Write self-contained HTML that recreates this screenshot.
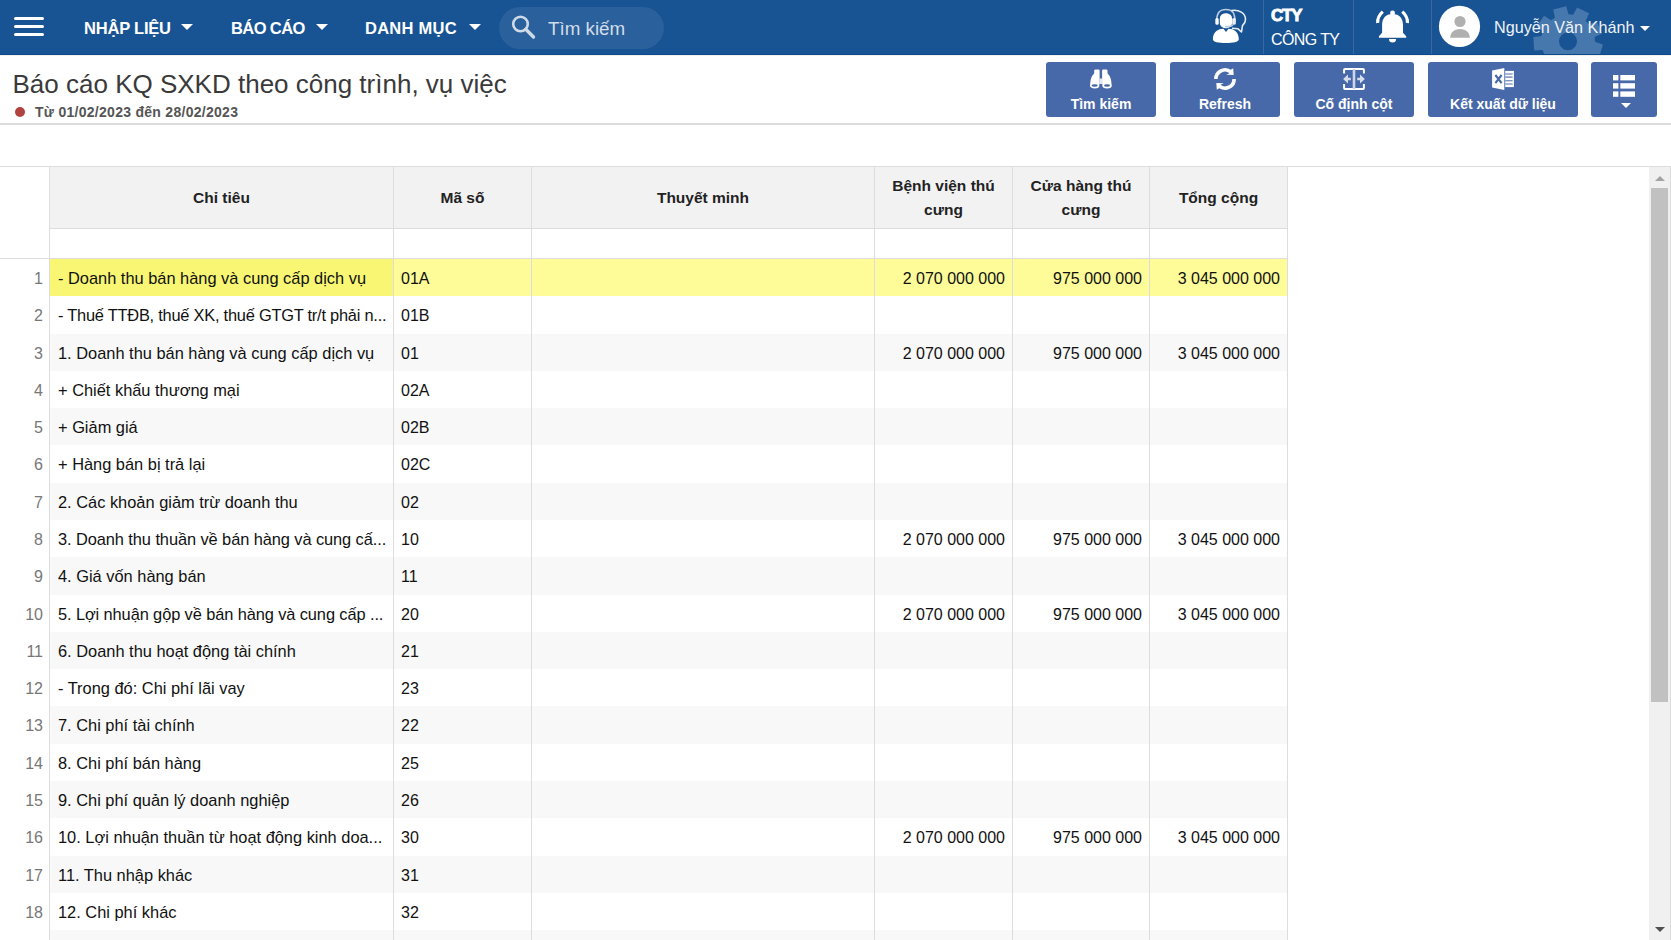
<!DOCTYPE html>
<html><head><meta charset="utf-8">
<style>
*{box-sizing:border-box;margin:0;padding:0}
html,body{width:1671px;height:940px;overflow:hidden;background:#fff;font-family:"Liberation Sans",sans-serif}
#nav{position:absolute;left:0;top:0;width:1671px;height:55px;background:#185393;border-bottom:1px solid #0a4a8e;overflow:hidden}
.ham{position:absolute;left:14px;width:30px;height:3px;background:#fff;border-radius:1.5px}
.menu{position:absolute;top:18px;color:#fff;font-weight:bold;font-size:16.5px;line-height:20px;white-space:nowrap;letter-spacing:-0.2px}
.caret{position:absolute;width:0;height:0;border-left:6px solid transparent;border-right:6px solid transparent;border-top:6px solid #fff}
#search{position:absolute;left:499px;top:7px;width:165px;height:42px;border-radius:21px;background:rgba(255,255,255,0.08)}
#sph{position:absolute;left:548px;top:17.5px;font-size:18.8px;line-height:22px;color:#d3dde9;white-space:nowrap}
.vdiv{position:absolute;top:0;width:1px;height:54px;background:#3a68a0}
.ico{position:absolute;overflow:visible}
#cty{position:absolute;left:1271px;top:6px;font-size:16.8px;line-height:19px;font-weight:bold;color:#fff;letter-spacing:-1.1px;-webkit-text-stroke:0.9px #fff;white-space:nowrap}
#congty{position:absolute;left:1271px;top:30px;font-size:16px;line-height:19px;color:#fff;white-space:nowrap;letter-spacing:-0.6px}
#uname{position:absolute;left:1494px;top:17px;font-size:16.2px;line-height:20px;color:#eef2f7;white-space:nowrap}
.btn{position:absolute;top:62px;height:55px;background:#4769a9;border-radius:3px;color:#fff;font-weight:bold;font-size:14px;text-align:center}
.btn span{position:absolute;left:0;right:0;top:34px;line-height:16px;white-space:nowrap}
#title{position:absolute;left:12.5px;top:68px;font-size:26px;line-height:32px;color:#3a3a3a;white-space:nowrap}
#date{position:absolute;left:35px;top:104px;font-size:14px;line-height:17px;color:#555;font-weight:bold;white-space:nowrap;letter-spacing:0.28px}
#dot{position:absolute;left:15px;top:107px;width:10px;height:10px;border-radius:50%;background:#b04340}
#hline{position:absolute;left:0;top:123px;width:1671px;height:2px;background:#dcdcdc}
#grid{position:absolute;left:0;top:166px;width:1671px;height:774px;border-top:1px solid #dddddd;overflow:hidden}
.vl{position:absolute;width:1px;background:#dddddd}
.hl{position:absolute;height:1px;background:#dddddd}
.hdr{position:absolute;top:0;height:62px;background:#f2f2f2}
.ht{position:absolute;font-weight:bold;font-size:15.5px;line-height:24px;color:#222;text-align:center;white-space:nowrap}
.row{position:absolute;left:50px;width:1237px;height:37.29px}
.c{position:absolute;top:0;height:100%;font-size:16px;line-height:39px;color:#111;white-space:nowrap;overflow:hidden}
.num{position:absolute;left:0;width:43px;text-align:right;font-size:16px;line-height:39px;color:#777}
.r{text-align:right}
</style></head><body>
<div id="nav">
  <svg class="ico" style="left:1488px;top:0" width="150" height="54" viewBox="1488 0 150 54"><g transform="translate(1568 41.3)"><path fill="#4677ad" fill-rule="evenodd" d="M-13.1 -23.6 L-14.8 -31.7 L-1.8 -35.0 L0.5 -27.0 L5.2 -26.5 L9.1 -33.8 L21.1 -28.0 L17.7 -20.4 L21.0 -17.0 L28.7 -20.1 L34.1 -7.9 L26.7 -4.2 L27.0 0.5 L34.9 3.1 L31.2 15.9 L23.1 13.9 L20.4 17.7 L24.7 24.7 L13.7 32.2 L8.8 25.5 L4.2 26.7 L3.1 34.9 L-10.2 33.5 L-9.7 25.2 L-13.9 23.1 L-20.1 28.7 L-29.4 19.1 L-23.6 13.1 L-25.5 8.8 L-33.8 9.1 L-34.7 -4.3 L-26.5 -5.2 L-25.2 -9.7 L-31.7 -14.8 L-23.9 -25.6 L-17.0 -21.0Z M9 0 A9 9 0 1 0 -9 0 A9 9 0 1 0 9 0Z"/></g></svg>
  <div class="ham" style="top:17px"></div>
  <div class="ham" style="top:25px"></div>
  <div class="ham" style="top:33px"></div>
  <div class="menu" style="left:84px">NHẬP LIỆU</div><div class="caret" style="left:181px;top:24px"></div>
  <div class="menu" style="left:231px;letter-spacing:-0.6px">BÁO CÁO</div><div class="caret" style="left:316px;top:24px"></div>
  <div class="menu" style="left:365px;letter-spacing:0.25px">DANH MỤC</div><div class="caret" style="left:469px;top:24px"></div>
  <div id="search"></div>
  <svg class="ico" style="left:510px;top:14px" width="28" height="26" viewBox="0 0 28 26"><circle cx="10.5" cy="10" r="7.3" fill="none" stroke="#cfdae7" stroke-width="2.6"/><path d="M15.8 15.3 L23.5 23" stroke="#cfdae7" stroke-width="3.4" stroke-linecap="round"/></svg>
  <div id="sph">Tìm kiếm</div>
  <svg class="ico" style="left:1208px;top:6px" width="44" height="42" viewBox="0 0 44 42">
    <path d="M8.5 17 C8.5 6 12 3.5 18 3.5 C24 3.5 27 6 27 16" fill="none" stroke="#b9cbe0" stroke-width="1.6"/>
    <path d="M23.5 4.5 C31 3.5 37.5 7 37.5 13.5 C37.5 17 35.5 18.5 34.5 19.5 L33.5 26 L30 22.8 L24 22.3" fill="none" stroke="#e6edf5" stroke-width="1.6" stroke-linejoin="round"/>
    <rect x="11.8" y="7.2" width="12.3" height="15" rx="5.5" fill="#fff"/>
    <rect x="7.4" y="12" width="3.3" height="6.8" rx="1.5" fill="#fff"/>
    <rect x="24.2" y="12" width="3.6" height="6.8" rx="1.5" fill="#e9eff6"/>
    <path d="M25 18.5 C24 21 21.5 20.6 17 20.6" fill="none" stroke="#b9cbe0" stroke-width="1.6"/>
    <path d="M4.9 33.5 C4.9 26 10 22.8 15.5 22.8 L18 26 L20.5 22.8 C26 22.8 30.8 26 30.8 33.5 C30.8 36 25 37 17.9 37 C10.5 37 4.9 36 4.9 33.5Z" fill="#fff"/>
  </svg>
  <div class="vdiv" style="left:1263px"></div>
  <div id="cty">CTY</div>
  <div id="congty">CÔNG TY</div>
  <div class="vdiv" style="left:1353px"></div>
  <svg class="ico" style="left:1370px;top:6px" width="44" height="42" viewBox="0 0 44 42">
    <rect x="20.1" y="4.5" width="4.9" height="5" rx="2.4" fill="#fff"/>
    <path d="M22.5 8 C15.5 8 12.1 12.5 12.1 19 L12.1 26.8 L8.9 30.3 L8.9 31.7 L36.2 31.7 L36.2 30.3 L33 26.8 L33 19 C33 12.5 29.5 8 22.5 8Z" fill="#fff"/>
    <path d="M19 33 A3.55 3.55 0 0 0 26.1 33Z" fill="#fff"/>
    <path d="M12.8 5.6 C9 9 7.3 12.5 7.7 17" fill="none" stroke="#fff" stroke-width="3.2"/>
    <path d="M32.3 5.6 C36.1 9 37.8 12.5 37.4 17" fill="none" stroke="#fff" stroke-width="3.2"/>
  </svg>
  <div class="vdiv" style="left:1431px"></div>
  <svg class="ico" style="left:1436px;top:4px" width="48" height="46" viewBox="0 0 48 46">
    <circle cx="23.5" cy="22.4" r="20.6" fill="#fff"/>
    <circle cx="24" cy="17.5" r="5.6" fill="#b0b0b0"/>
    <path d="M14.2 33.8 C14.2 28.5 18 25 24 25 C30 25 33.8 28.5 33.8 33.8Z" fill="#b0b0b0"/>
  </svg>
  <div id="uname">Nguyễn Văn Khánh</div>
  <div class="caret" style="left:1640px;top:26px;border-left-width:5px;border-right-width:5px;border-top-width:5px"></div>
</div>
<div style="position:absolute;left:0;top:55px;width:1671px;height:1px;background:#f1eeeb"></div>
<div id="title">Báo cáo KQ SXKD theo công trình, vụ việc</div>
<div id="dot"></div>
<div id="date">Từ 01/02/2023 đến 28/02/2023</div>
<div class="btn" style="left:1046px;width:110px"><span>Tìm kiếm</span>
  <svg class="ico" style="left:43px;top:2px" width="26" height="28" viewBox="-1 0 26 28">
    <path d="M4.2 6.6 Q4.3 5.5 5.5 5.5 H8.5 Q9.6 5.5 9.6 6.6 V20.5 H0.1 Q0.1 16 1.8 12.5 L4.2 9.2Z" fill="#fff"/>
    <path d="M17.5 6.6 Q17.4 5.5 16.2 5.5 H13.2 Q12.1 5.5 12.1 6.6 V20.5 H21.6 Q21.6 16 19.9 12.5 L17.5 9.2Z" fill="#fff"/>
    <rect x="9.5" y="14.5" width="2.7" height="5.5" fill="#e3e9f2"/>
    <ellipse cx="4.65" cy="21.6" rx="3.9" ry="2.1" fill="#4769a9" stroke="#fff" stroke-width="1.7"/>
    <ellipse cx="17.05" cy="21.6" rx="3.9" ry="2.1" fill="#4769a9" stroke="#fff" stroke-width="1.7"/>
  </svg>
</div>
<div class="btn" style="left:1170px;width:110px"><span>Refresh</span>
  <svg class="ico" style="left:44px;top:6px" width="22" height="22" viewBox="0 0 1536 1536"><path fill="#fff" d="M0 768 A768 768 0 0 1 1175 117 L1340 25 L1375 490 L855 470 L1083 365 A512 512 0 0 0 256 768 Z M1536 768 A768 768 0 0 1 361 1419 L196 1511 L161 1046 L681 1066 L453 1171 A512 512 0 0 0 1280 768 Z"/></svg>
</div>
<div class="btn" style="left:1294px;width:120px"><span>Cố định cột</span>
  <svg class="ico" style="left:45px;top:2px" width="30" height="30" viewBox="0 0 30 30">
    <path d="M5.1 9.5 V5.8 Q5.1 5 6 5 H24 Q24.9 5 24.9 5.8 V9.5" fill="none" stroke="#fff" stroke-width="2"/>
    <path d="M5.1 20 V24 Q5.1 24.9 6 24.9 H24 Q24.9 24.9 24.9 24 V20" fill="none" stroke="#fff" stroke-width="2"/>
    <rect x="13.7" y="5" width="2.6" height="20" fill="#cdd6e6"/>
    <path d="M4.1 15 L9 10.5 V19.5Z M8 13.7 H11.8 V16.3 H8Z" fill="#d5dcea"/>
    <path d="M25.9 15 L21 10.5 V19.5Z M22 13.7 H18.2 V16.3 H22Z" fill="#d5dcea"/>
  </svg>
</div>
<div class="btn" style="left:1428px;width:150px"><span>Kết xuất dữ liệu</span>
  <svg class="ico" style="left:60px;top:2px" width="30" height="30" viewBox="0 0 30 30">
    <rect x="17.2" y="6.9" width="8.7" height="16.2" fill="#fff"/>
    <rect x="17.2" y="9.3" width="7.4" height="1.4" fill="#7f96c2"/>
    <rect x="17.2" y="12.3" width="7.4" height="1.6" fill="#7f96c2"/>
    <rect x="17.2" y="16" width="7.4" height="1.4" fill="#7f96c2"/>
    <rect x="17.2" y="19.3" width="7.4" height="1.4" fill="#7f96c2"/>
    <path d="M4.1 6.4 L16.3 4.1 V25.9 L4.1 23.6Z" fill="#fff"/>
    <path d="M7.4 11 L13.6 19.2 M13.6 11 L7.4 19.2" stroke="#4769a9" stroke-width="2.1"/>
  </svg>
</div>
<div class="btn" style="left:1591px;width:66px">
  <svg class="ico" style="left:15px;top:6px" width="36" height="48" viewBox="1606 68 36 48">
    <rect x="1613" y="75" width="5.4" height="5.4" fill="#fff"/><rect x="1620.3" y="75" width="14.7" height="5.4" fill="#fff"/>
    <rect x="1613" y="83.2" width="5.4" height="5.4" fill="#fff"/><rect x="1620.3" y="83.2" width="14.7" height="5.4" fill="#fff"/>
    <rect x="1613" y="91.4" width="5.4" height="5.4" fill="#fff"/><rect x="1620.3" y="91.4" width="14.7" height="5.4" fill="#fff"/>
    <path d="M1621 102.9 H1631 L1626 108Z" fill="#fff"/>
  </svg>
</div>
<div id="hline"></div>
<div id="grid">
<div class="hdr" style="left:50px;width:1237px;top:0;height:61px"></div>
<div class="row" style="top:92.00px;background:#fdfc98">
<div class="c" style="left:0;width:343px;background:#f8f673"></div>
<div class="c" style="left:8px;width:340px;font-size:16.4px;letter-spacing:0px">- Doanh thu bán hàng và cung cấp dịch vụ</div>
<div class="c" style="left:351px;width:130px">01A</div>
<div class="c r" style="left:825px;width:130px">2 070 000 000</div>
<div class="c r" style="left:962px;width:130px">975 000 000</div>
<div class="c r" style="left:1100px;width:130px">3 045 000 000</div>
</div>
<div class="num" style="top:92.00px">1</div>
<div class="row" style="top:129.29px;background:#ffffff">
<div class="c" style="left:8px;width:340px;font-size:16.4px;letter-spacing:-0.23px">- Thuế TTĐB, thuế XK, thuế GTGT tr/t phải n...</div>
<div class="c" style="left:351px;width:130px">01B</div>
</div>
<div class="num" style="top:129.29px">2</div>
<div class="row" style="top:166.58px;background:#f8f8f8">
<div class="c" style="left:8px;width:340px;font-size:16.4px;letter-spacing:0px">1. Doanh thu bán hàng và cung cấp dịch vụ</div>
<div class="c" style="left:351px;width:130px">01</div>
<div class="c r" style="left:825px;width:130px">2 070 000 000</div>
<div class="c r" style="left:962px;width:130px">975 000 000</div>
<div class="c r" style="left:1100px;width:130px">3 045 000 000</div>
</div>
<div class="num" style="top:166.58px">3</div>
<div class="row" style="top:203.87px;background:#ffffff">
<div class="c" style="left:8px;width:340px;font-size:16.4px;letter-spacing:0px">+ Chiết khấu thương mại</div>
<div class="c" style="left:351px;width:130px">02A</div>
</div>
<div class="num" style="top:203.87px">4</div>
<div class="row" style="top:241.16px;background:#f8f8f8">
<div class="c" style="left:8px;width:340px;font-size:16.4px;letter-spacing:0px">+ Giảm giá</div>
<div class="c" style="left:351px;width:130px">02B</div>
</div>
<div class="num" style="top:241.16px">5</div>
<div class="row" style="top:278.45px;background:#ffffff">
<div class="c" style="left:8px;width:340px;font-size:16.4px;letter-spacing:0px">+ Hàng bán bị trả lại</div>
<div class="c" style="left:351px;width:130px">02C</div>
</div>
<div class="num" style="top:278.45px">6</div>
<div class="row" style="top:315.74px;background:#f8f8f8">
<div class="c" style="left:8px;width:340px;font-size:16.4px;letter-spacing:0px">2. Các khoản giảm trừ doanh thu</div>
<div class="c" style="left:351px;width:130px">02</div>
</div>
<div class="num" style="top:315.74px">7</div>
<div class="row" style="top:353.03px;background:#ffffff">
<div class="c" style="left:8px;width:340px;font-size:16.4px;letter-spacing:-0.08px">3. Doanh thu thuần về bán hàng và cung cấ...</div>
<div class="c" style="left:351px;width:130px">10</div>
<div class="c r" style="left:825px;width:130px">2 070 000 000</div>
<div class="c r" style="left:962px;width:130px">975 000 000</div>
<div class="c r" style="left:1100px;width:130px">3 045 000 000</div>
</div>
<div class="num" style="top:353.03px">8</div>
<div class="row" style="top:390.32px;background:#f8f8f8">
<div class="c" style="left:8px;width:340px;font-size:16.4px;letter-spacing:0px">4. Giá vốn hàng bán</div>
<div class="c" style="left:351px;width:130px">11</div>
</div>
<div class="num" style="top:390.32px">9</div>
<div class="row" style="top:427.61px;background:#ffffff">
<div class="c" style="left:8px;width:340px;font-size:16.4px;letter-spacing:-0.1px">5. Lợi nhuận gộp về bán hàng và cung cấp ...</div>
<div class="c" style="left:351px;width:130px">20</div>
<div class="c r" style="left:825px;width:130px">2 070 000 000</div>
<div class="c r" style="left:962px;width:130px">975 000 000</div>
<div class="c r" style="left:1100px;width:130px">3 045 000 000</div>
</div>
<div class="num" style="top:427.61px">10</div>
<div class="row" style="top:464.90px;background:#f8f8f8">
<div class="c" style="left:8px;width:340px;font-size:16.4px;letter-spacing:0px">6. Doanh thu hoạt động tài chính</div>
<div class="c" style="left:351px;width:130px">21</div>
</div>
<div class="num" style="top:464.90px">11</div>
<div class="row" style="top:502.19px;background:#ffffff">
<div class="c" style="left:8px;width:340px;font-size:16.4px;letter-spacing:0px">- Trong đó: Chi phí lãi vay</div>
<div class="c" style="left:351px;width:130px">23</div>
</div>
<div class="num" style="top:502.19px">12</div>
<div class="row" style="top:539.48px;background:#f8f8f8">
<div class="c" style="left:8px;width:340px;font-size:16.4px;letter-spacing:0px">7. Chi phí tài chính</div>
<div class="c" style="left:351px;width:130px">22</div>
</div>
<div class="num" style="top:539.48px">13</div>
<div class="row" style="top:576.77px;background:#ffffff">
<div class="c" style="left:8px;width:340px;font-size:16.4px;letter-spacing:0px">8. Chi phí bán hàng</div>
<div class="c" style="left:351px;width:130px">25</div>
</div>
<div class="num" style="top:576.77px">14</div>
<div class="row" style="top:614.06px;background:#f8f8f8">
<div class="c" style="left:8px;width:340px;font-size:16.4px;letter-spacing:0px">9. Chi phí quản lý doanh nghiệp</div>
<div class="c" style="left:351px;width:130px">26</div>
</div>
<div class="num" style="top:614.06px">15</div>
<div class="row" style="top:651.35px;background:#ffffff">
<div class="c" style="left:8px;width:340px;font-size:16.4px;letter-spacing:0px">10. Lợi nhuận thuần từ hoạt động kinh doa...</div>
<div class="c" style="left:351px;width:130px">30</div>
<div class="c r" style="left:825px;width:130px">2 070 000 000</div>
<div class="c r" style="left:962px;width:130px">975 000 000</div>
<div class="c r" style="left:1100px;width:130px">3 045 000 000</div>
</div>
<div class="num" style="top:651.35px">16</div>
<div class="row" style="top:688.64px;background:#f8f8f8">
<div class="c" style="left:8px;width:340px;font-size:16.4px;letter-spacing:0px">11. Thu nhập khác</div>
<div class="c" style="left:351px;width:130px">31</div>
</div>
<div class="num" style="top:688.64px">17</div>
<div class="row" style="top:725.93px;background:#ffffff">
<div class="c" style="left:8px;width:340px;font-size:16.4px;letter-spacing:0px">12. Chi phí khác</div>
<div class="c" style="left:351px;width:130px">32</div>
</div>
<div class="num" style="top:725.93px">18</div>
<div class="row" style="top:763.22px;background:#f8f8f8">
</div>
<div class="vl" style="left:49px;top:0;height:774px"></div>
<div class="vl" style="left:393px;top:0;height:774px"></div>
<div class="vl" style="left:531px;top:0;height:774px"></div>
<div class="vl" style="left:874px;top:0;height:774px"></div>
<div class="vl" style="left:1012px;top:0;height:774px"></div>
<div class="vl" style="left:1149px;top:0;height:774px"></div>
<div class="vl" style="left:1287px;top:0;height:774px"></div>
<div class="hl" style="left:50px;width:1237px;top:61px"></div>
<div class="hl" style="left:0;width:1287px;top:91px"></div>
<div class="ht" style="left:50px;width:343px;top:19px">Chỉ tiêu</div>
<div class="ht" style="left:394px;width:137px;top:19px">Mã số</div>
<div class="ht" style="left:532px;width:342px;top:19px">Thuyết minh</div>
<div class="ht" style="left:875px;width:137px;top:7px">Bệnh viện thú<br>cưng</div>
<div class="ht" style="left:1013px;width:136px;top:7px">Cửa hàng thú<br>cưng</div>
<div class="ht" style="left:1150px;width:137px;top:19px">Tổng cộng</div>
<div id="sb" style="position:absolute;left:1649px;top:0;width:21px;height:774px;background:#f0f0f0"></div>
<div style="position:absolute;left:1670px;top:0;width:1px;height:774px;background:#dcdcdc"></div>
<div style="position:absolute;left:1651px;top:21px;width:17px;height:514px;background:#c1c1c1"></div>
<div style="position:absolute;left:1655px;top:9px;width:0;height:0;border-left:5px solid transparent;border-right:5px solid transparent;border-bottom:5px solid #a3a3a3"></div>
<div style="position:absolute;left:1655px;top:760px;width:0;height:0;border-left:5px solid transparent;border-right:5px solid transparent;border-top:5px solid #505050"></div>
</div>
</body></html>
